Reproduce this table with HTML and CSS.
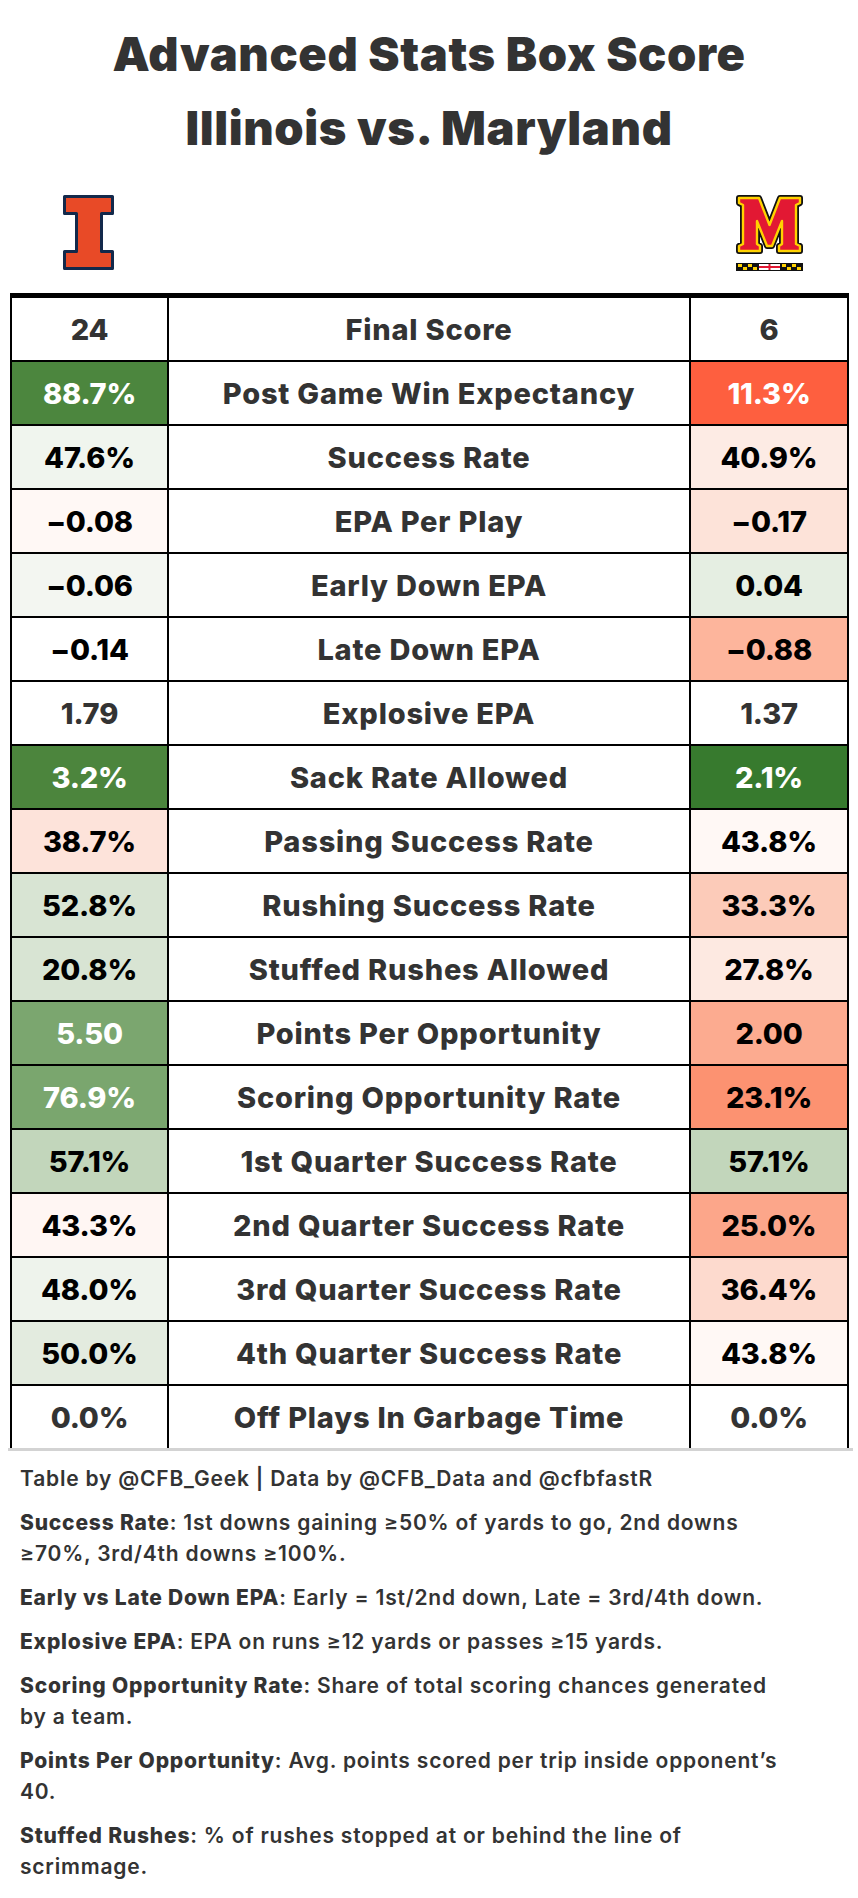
FILE: index.html
```html
<!DOCTYPE html>
<html lang="en">
<head>
<meta charset="utf-8">
<title>Advanced Stats Box Score</title>
<link rel="stylesheet" href="styles.css">
</head>
<body>
<header class="title">
  <div>Advanced Stats Box Score</div>
  <div>Illinois vs. Maryland</div>
</header>

<div class="logos">
  <div class="logo-cell">
    <svg class="logo-ill" width="51" height="75" viewBox="0 0 51 75" aria-label="Illinois">
      <path d="M1.5,1.5 H49.5 V18.5 H38.5 V56.5 H49.5 V73.5 H1.5 V56.5 H13.5 V18.5 H1.5 Z" fill="#E84A27" stroke="#13294B" stroke-width="3" stroke-linejoin="round"/>
    </svg>
  </div>
  <div></div>
  <div class="logo-cell">
    <svg class="logo-md" width="67" height="76" viewBox="0 0 67 76" aria-label="Maryland">
      <path d="M3,3 L23,3 L33.5,30 L44,3 L64,3 L64,8 L60,10 L60,49 L64,51 L64,56 L43,56 L43,51 L46,49 L46,26 L36,51 L31,51 L21,26 L21,49 L24,51 L24,56 L3,56 L3,51 L7,49 L7,10 L3,8 Z" fill="#111" stroke="#111" stroke-width="6" stroke-linejoin="round"/>
      <path d="M3,3 L23,3 L33.5,30 L44,3 L64,3 L64,8 L60,10 L60,49 L64,51 L64,56 L43,56 L43,51 L46,49 L46,26 L36,51 L31,51 L21,26 L21,49 L24,51 L24,56 L3,56 L3,51 L7,49 L7,10 L3,8 Z" fill="#E21833" stroke="#FFD200" stroke-width="2.4" stroke-linejoin="round"/>
      <rect x="0" y="68" width="67" height="8" fill="#111"/>
      <rect x="2" y="69" width="4" height="3" fill="#FFD200"/>
      <rect x="7" y="72" width="4" height="3" fill="#FFD200"/>
      <rect x="12" y="69" width="4" height="3" fill="#FFD200"/>
      <rect x="17" y="72" width="4" height="3" fill="#FFD200"/>
      <rect x="23" y="69" width="21" height="6" fill="#fff"/>
      <rect x="23" y="71" width="21" height="2" fill="#E21833"/>
      <rect x="32.5" y="69" width="2" height="6" fill="#E21833"/>
      <rect x="46" y="69" width="4" height="3" fill="#FFD200"/>
      <rect x="51" y="72" width="4" height="3" fill="#FFD200"/>
      <rect x="56" y="69" width="4" height="3" fill="#FFD200"/>
      <rect x="61" y="72" width="4" height="3" fill="#FFD200"/>
    </svg>
  </div>
</div>

<div class="table">
  <div class="row"><div class="cell c-plain">24</div><div class="cell label">Final Score</div><div class="cell c-plain">6</div></div>
  <div class="row"><div class="cell c-white" style="background:#4C863E">88.7%</div><div class="cell label">Post Game Win Expectancy</div><div class="cell c-white" style="background:#FE5F3F">11.3%</div></div>
  <div class="row"><div class="cell" style="background:#F0F5EE">47.6%</div><div class="cell label">Success Rate</div><div class="cell" style="background:#FDEBE4">40.9%</div></div>
  <div class="row"><div class="cell" style="background:#FFF8F5">−0.08</div><div class="cell label">EPA Per Play</div><div class="cell" style="background:#FDE3D9">−0.17</div></div>
  <div class="row"><div class="cell" style="background:#F3F6F1">−0.06</div><div class="cell label">Early Down EPA</div><div class="cell" style="background:#E5EEE2">0.04</div></div>
  <div class="row"><div class="cell" style="background:#FFFFFF">−0.14</div><div class="cell label">Late Down EPA</div><div class="cell" style="background:#FDB59C">−0.88</div></div>
  <div class="row"><div class="cell c-plain">1.79</div><div class="cell label">Explosive EPA</div><div class="cell c-plain">1.37</div></div>
  <div class="row"><div class="cell c-white" style="background:#4C853D">3.2%</div><div class="cell label">Sack Rate Allowed</div><div class="cell c-white" style="background:#377A2E">2.1%</div></div>
  <div class="row"><div class="cell" style="background:#FDE3DA">38.7%</div><div class="cell label">Passing Success Rate</div><div class="cell" style="background:#FFF8F5">43.8%</div></div>
  <div class="row"><div class="cell" style="background:#D8E4D3">52.8%</div><div class="cell label">Rushing Success Rate</div><div class="cell" style="background:#FCCBB9">33.3%</div></div>
  <div class="row"><div class="cell" style="background:#D8E4D3">20.8%</div><div class="cell label">Stuffed Rushes Allowed</div><div class="cell" style="background:#FDE9E1">27.8%</div></div>
  <div class="row"><div class="cell c-white" style="background:#7BA66F">5.50</div><div class="cell label">Points Per Opportunity</div><div class="cell" style="background:#FCAB90">2.00</div></div>
  <div class="row"><div class="cell c-white" style="background:#7AA66E">76.9%</div><div class="cell label">Scoring Opportunity Rate</div><div class="cell" style="background:#FC9271">23.1%</div></div>
  <div class="row"><div class="cell" style="background:#C2D6BB">57.1%</div><div class="cell label">1st Quarter Success Rate</div><div class="cell" style="background:#C2D6BB">57.1%</div></div>
  <div class="row"><div class="cell" style="background:#FFF6F3">43.3%</div><div class="cell label">2nd Quarter Success Rate</div><div class="cell" style="background:#FCA68A">25.0%</div></div>
  <div class="row"><div class="cell" style="background:#EEF3EC">48.0%</div><div class="cell label">3rd Quarter Success Rate</div><div class="cell" style="background:#FDDACE">36.4%</div></div>
  <div class="row"><div class="cell" style="background:#E3EBDF">50.0%</div><div class="cell label">4th Quarter Success Rate</div><div class="cell" style="background:#FFF8F5">43.8%</div></div>
  <div class="row last"><div class="cell c-plain">0.0%</div><div class="cell label">Off Plays In Garbage Time</div><div class="cell c-plain">0.0%</div></div>
</div>
<div class="table-foot"></div>

<footer class="notes">
  <p>Table by @CFB_Geek | Data by @CFB_Data and @cfbfastR</p>
  <p><b>Success Rate</b>: 1st downs gaining ≥50% of yards to go, 2nd downs<br>≥70%, 3rd/4th downs ≥100%.</p>
  <p><b>Early vs Late Down EPA</b>: Early = 1st/2nd down, Late = 3rd/4th down.</p>
  <p><b>Explosive EPA</b>: EPA on runs ≥12 yards or passes ≥15 yards.</p>
  <p><b>Scoring Opportunity Rate</b>: Share of total scoring chances generated<br>by a team.</p>
  <p><b>Points Per Opportunity</b>: Avg. points scored per trip inside opponent’s<br>40.</p>
  <p><b>Stuffed Rushes</b>: % of rushes stopped at or behind the line of<br>scrimmage.</p>
</footer>
</body>
</html>
```
FILE: styles.css
```css
* { box-sizing: border-box; }

body {
  margin: 0;
  background: #fff;
  font-family: "Inter", "Liberation Sans", sans-serif;
  color: #333;
}

.title {
  padding-top: 17px;
  text-align: center;
  font-size: 47px;
  font-weight: 900;
  line-height: 74px;
  color: #333;
  letter-spacing: 0.6px;
}

.logos {
  display: grid;
  grid-template-columns: 157px 522px 160px;
  margin-left: 10px;
  height: 128px;
  padding-top: 30px;
}

.logo-cell {
  display: flex;
  justify-content: center;
  align-items: flex-start;
}

.logo-cell svg { display: block; }

.table {
  margin-left: 10px;
  width: 839px;
  border-top: 5px solid #000;
}

.row {
  display: grid;
  grid-template-columns: 157px 522px 160px;
  height: 64px;
}

.cell {
  display: flex;
  align-items: center;
  justify-content: center;
  border-left: 2px solid #000;
  border-bottom: 2px solid #000;
  font-size: 29px;
  font-weight: 800;
  letter-spacing: -0.2px;
  color: #000;
  white-space: nowrap;
}

.cell:last-child { border-right: 2px solid #000; }

.row.last { height: 62px; }
.row.last .cell { border-bottom: 0; }

.cell.label {
  color: #333;
  letter-spacing: 0.8px;
}
.cell.c-plain { color: #333; }
.cell.c-white { color: #fff; }

.table-foot {
  margin-left: 8px;
  width: 845px;
  height: 3px;
  background: #D3D3D3;
}

.notes {
  padding: 12px 0 0 20px;
  font-size: 21px;
  line-height: 31px;
  font-weight: 600;
  letter-spacing: 0.8px;
  color: #333;
}

.notes p { margin: 0 0 13px; }
.notes b { font-weight: 800; }
```
